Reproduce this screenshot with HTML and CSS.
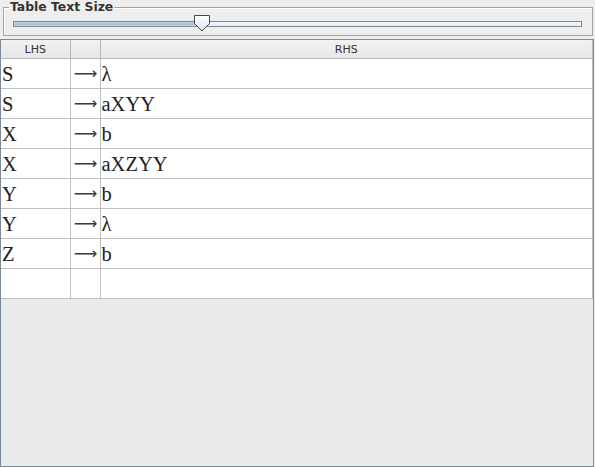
FILE: index.html
```html
<!DOCTYPE html>
<html>
<head>
<meta charset="utf-8">
<link rel="stylesheet" href="styles.css">
</head>
<body>
<div class="panel">
  <fieldset class="group">
    <legend class="group-title">Table Text Size</legend>
    <div class="slider">
      <div class="track">
        <div class="track-fill"></div>
      </div>
      <svg class="thumb" width="17" height="17" viewBox="0 0 17 17">
        <defs>
          <linearGradient id="tg" x1="0" y1="0" x2="0" y2="1">
            <stop offset="0" stop-color="#ffffff"/>
            <stop offset="1" stop-color="#dde6ef"/>
          </linearGradient>
        </defs>
        <path d="M0.5 0.5 H15.5 V8.5 L8 16 L0.5 8.5 Z" fill="url(#tg)" stroke="#3d4a56" stroke-width="1"/>
      </svg>
    </div>
  </fieldset>
  <div class="scroll">
    <table class="grammar">
      <colgroup>
        <col class="c-lhs">
        <col class="c-arrow">
        <col class="c-rhs">
      </colgroup>
      <thead>
        <tr><th>LHS</th><th></th><th>RHS</th></tr>
      </thead>
      <tbody>
        <tr><td>S</td><td class="arrow">⟶</td><td>λ</td></tr>
        <tr><td>S</td><td class="arrow">⟶</td><td>aXYY</td></tr>
        <tr><td>X</td><td class="arrow">⟶</td><td>b</td></tr>
        <tr><td>X</td><td class="arrow">⟶</td><td>aXZYY</td></tr>
        <tr><td>Y</td><td class="arrow">⟶</td><td>b</td></tr>
        <tr><td>Y</td><td class="arrow">⟶</td><td>λ</td></tr>
        <tr><td>Z</td><td class="arrow">⟶</td><td>b</td></tr>
        <tr><td></td><td class="arrow"></td><td></td></tr>
      </tbody>
    </table>
  </div>
</div>
</body>
</html>
```

FILE: styles.css
```css
html, body {
  margin: 0;
  padding: 0;
  background: #eeeeee;
  height: 100%;
}
.panel {
  width: 595px;
  height: 467px;
  display: flex;
  flex-direction: column;
  box-sizing: border-box;
}
.group {
  margin: 0 2px 0 3px;
  padding: 0 9px 0 9px;
  border: 1px solid #a3a3a3;
  box-shadow: inset 1px 1px 0 #ffffff;
  min-width: 0;
  height: 36px;
  box-sizing: border-box;
}
.group-title {
  font-family: "DejaVu Sans", sans-serif;
  font-weight: bold;
  font-size: 12.4px;
  color: #333333;
  padding: 0 1px;
  margin-left: -4px;
  line-height: 14px;
}
.slider {
  position: relative;
  height: 20px;
}
.track {
  position: absolute;
  left: 0;
  right: 1px;
  top: 7px;
  height: 6px;
  border: 1px solid #7a8a99;
  box-sizing: border-box;
  background: linear-gradient(#f4f7fa, #e4eaf0);
}
.track-fill {
  width: 188px;
  height: 100%;
  background: linear-gradient(#c6d4e2, #a7bcd1 60%, #dbe4ee);
}
.thumb {
  position: absolute;
  left: 181px;
  top: 1px;
}
.scroll {
  flex: 1;
  margin-top: 3px;
  margin-right: 1px;
  border: 1px solid #7a8a99;
  background: #ebebeb;
  overflow: hidden;
}
.grammar {
  width: 592px;
  border-collapse: collapse;
  table-layout: fixed;
  background: #ffffff;
}
.c-lhs { width: 69px; }
.c-arrow { width: 30px; }
.grammar th {
  height: 18px;
  padding: 0;
  font-family: "DejaVu Sans", sans-serif;
  font-weight: normal;
  font-size: 11px;
  color: #333333;
  background: linear-gradient(#f2f2f2, #e6e6e6);
  border-right: 1px solid #b8b8b8;
  border-bottom: 1px solid #b8b8b8;
  text-align: center;
}
.grammar td {
  height: 29px;
  padding: 0 0 0 1px;
  font-family: "Liberation Serif", "DejaVu Serif", serif;
  font-size: 20.5px;
  line-height: 22px;
  color: #222222;
  border-right: 1px solid #c0c0c0;
  border-bottom: 1px solid #c0c0c0;
  text-align: left;
  white-space: nowrap;
  overflow: hidden;
}
.grammar td.arrow {
  font-family: "DejaVu Sans", sans-serif;
  font-size: 16.5px;
  line-height: 18px;
  text-align: right;
  padding: 0 2px 0 0;
  color: #3a3a3a;
}
```
